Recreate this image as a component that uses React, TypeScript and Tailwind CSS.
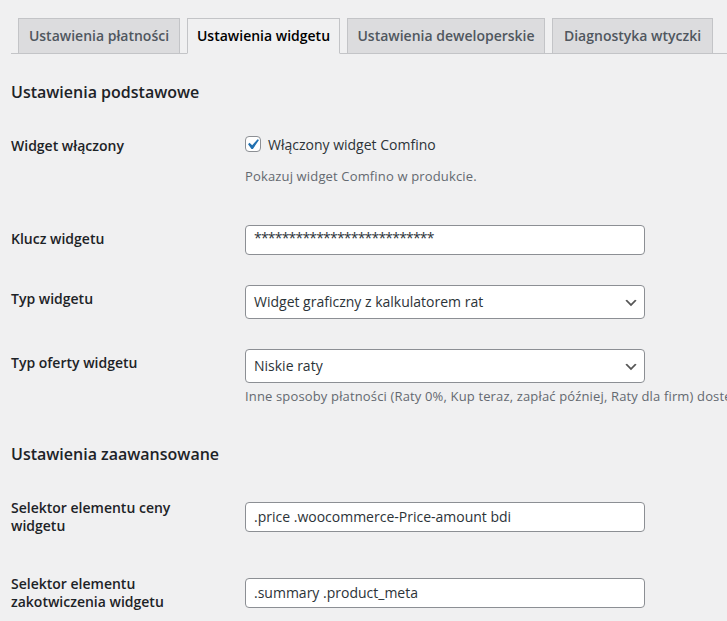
const tabs = [
  { label: 'Ustawienia płatności', width: 'w-[162px]', active: false },
  { label: 'Ustawienia widgetu', width: 'w-[153px]', active: true },
  { label: 'Ustawienia deweloperskie', width: 'w-[198px]', active: false },
  { label: 'Diagnostyka wtyczki', width: 'w-[161px]', active: false },
];

function Chevron() {
  return (
    <svg
      aria-hidden="true"
      viewBox="0 0 20 20"
      className="pointer-events-none absolute right-[5px] top-[9px] h-4 w-4"
    >
      <path d="M5 6l5 5 5-5 2 1-7 7-7-7 2-1z" fill="#555" />
    </svg>
  );
}

function Select({ value }: { value: string }) {
  return (
    <div className="relative h-[34px] w-[400px] rounded-[4px] border border-[#8c8f94] bg-white pl-2 pr-6 text-[14px] leading-[32px] text-[#2c3338]">
      {value}
      <Chevron />
    </div>
  );
}

function TextInput({ value, stars }: { value: string; stars?: boolean }) {
  return (
    <div
      className={`h-[30px] w-[400px] rounded-[4px] border border-[#8c8f94] bg-white px-2 text-[14px] text-[#2c3338] ${
        stars ? 'leading-[24px] tracking-[-0.8px]' : 'leading-[28px]'
      }`}
    >
      {value}
    </div>
  );
}

function Checkbox() {
  return (
    <span className="relative inline-block h-4 w-4 shrink-0 rounded-[4px] border border-[#8c8f94] bg-white">
      <svg aria-hidden="true" viewBox="3.81 2.86 13.33 13.33" className="absolute inset-0 h-[14px] w-[14px]">
        <path d="M14.83 4.89l1.34.94-5.81 8.38H9.02L5.78 9.67l1.34-1.25 2.57 2.4z" fill="#2271b1" />
      </svg>
    </span>
  );
}

function Label({ children, top }: { children: React.ReactNode; top: string }) {
  return (
    <div className={`w-[234px] shrink-0 ${top}`}>
      <div className="w-[200px] text-[14px] font-semibold leading-[18px] text-[#1d2327]">{children}</div>
    </div>
  );
}

export default function App() {
  return (
    <div
      className="min-h-screen overflow-hidden bg-[#f0f0f1] pl-[11px]"
      style={{ fontFamily: '"Open Sans", "Noto Sans", sans-serif' }}
    >
      {/* Tab strip */}
      <div className="flex gap-[7px] border-b border-[#c3c4c7] pl-[7px] pt-[18px]">
        {tabs.map((t) => (
          <div
            key={t.label}
            className={`-mb-px h-[36px] ${t.width} whitespace-nowrap border border-[#c3c4c7] text-center text-[14px] font-semibold leading-[34px] ${
              t.active ? 'border-b-[#f0f0f1] bg-[#f0f0f1] text-black' : 'bg-[#dcdcde] text-[#50575e]'
            }`}
          >
            {t.label}
          </div>
        ))}
      </div>

      <h2 className="mt-[27px] h-[22px] text-[16px] font-semibold leading-[22px] text-[#1d2327]">
        Ustawienia podstawowe
      </h2>

      {/* Widget enabled */}
      <div className="flex h-[107px]">
        <Label top="pt-[34px]">Widget włączony</Label>
        <div className="pt-[28px]">
          <label className="flex h-[26px] items-center gap-[7px] text-[14px] text-[#2c3338]">
            <Checkbox />
            Włączony widget Comfino
          </label>
          <p className="mt-[10px] text-[13px] leading-[18px] tracking-[0.15px] text-[#646970]">
            Pokazuj widget Comfino w produkcie.
          </p>
        </div>
      </div>

      {/* Widget key */}
      <div className="flex h-[60px]">
        <Label top="pt-[20px]">Klucz widgetu</Label>
        <div className="pt-[15px]">
          <TextInput value="**************************" stars />
        </div>
      </div>

      {/* Widget type */}
      <div className="flex h-[64px]">
        <Label top="pt-[20px]">Typ widgetu</Label>
        <div className="pt-[15px]">
          <Select value="Widget graficzny z kalkulatorem rat" />
        </div>
      </div>

      {/* Offer type */}
      <div className="flex h-[109px]">
        <Label top="pt-[20px]">Typ oferty widgetu</Label>
        <div className="pt-[15px]">
          <Select value="Niskie raty" />
          <p className="mt-[4px] whitespace-nowrap text-[13px] leading-[18px] tracking-[0.15px] text-[#646970]">
            Inne sposoby płatności (Raty 0%, Kup teraz, zapłać później, Raty dla firm) dostępne są w widgecie po
            kliknięciu.
          </p>
        </div>
      </div>

      <h2 className="h-[22px] text-[16px] font-semibold leading-[22px] text-[#1d2327]">Ustawienia zaawansowane</h2>

      {/* Price selector */}
      <div className="flex h-[90px]">
        <Label top="pt-[34px]">Selektor elementu ceny widgetu</Label>
        <div className="pt-[37px]">
          <TextInput value=".price .woocommerce-Price-amount bdi" />
        </div>
      </div>

      {/* Anchor selector */}
      <div className="flex h-[66px]">
        <Label top="pt-[20px]">Selektor elementu zakotwiczenia widgetu</Label>
        <div className="pt-[23px]">
          <TextInput value=".summary .product_meta" />
        </div>
      </div>
    </div>
  );
}
